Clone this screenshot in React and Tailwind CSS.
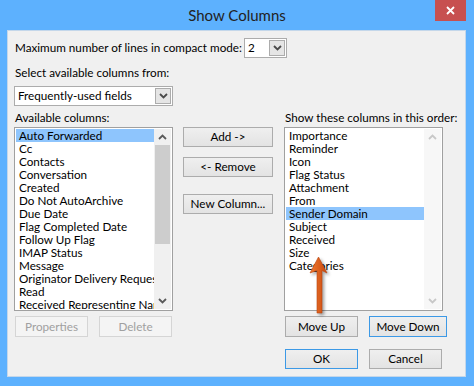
import React from "react";

const ChevDown = ({ color = "#4a4a4a" }) => (
  <svg width="9" height="6" viewBox="0 0 9 6">
    <polyline points="1,1 4.5,4.5 8,1" fill="none" stroke={color} strokeWidth="1.8" />
  </svg>
);
const ChevUp = ({ color = "#5a5a5a" }) => (
  <svg width="9" height="6" viewBox="0 0 9 6">
    <polyline points="1,5 4.5,1.5 8,5" fill="none" stroke={color} strokeWidth="1.8" />
  </svg>
);

function Select({ value, w }) {
  return (
    <div className={`flex items-center h-[20px] bg-white border border-[#acacac] ${w}`}>
      <span className="pl-[3px] leading-none">{value}</span>
      <div className="ml-auto mr-[1px] w-[16px] h-[16px] bg-[#e5e5e5] border border-[#acacac] flex items-center justify-center">
        <ChevDown />
      </div>
    </div>
  );
}

function Btn({ children, w, h = "h-[21px]", def, disabled, cls = "" }) {
  return (
    <div
      className={`${w} ${h} ${cls} flex items-center justify-center border ${
        disabled
          ? "border-[#d5d5d5] bg-[#f4f4f4] text-[#a0a0a0]"
          : def
          ? "border-[#3c99e6] bg-linear-to-b from-[#efefef] to-[#e3e3e3] text-black"
          : "border-[#acacac] bg-linear-to-b from-[#efefef] to-[#e3e3e3] text-black"
      }`}
    >
      {children}
    </div>
  );
}

function ListBox({ items, selected, enabled }) {
  return (
    <div className="w-[159px] h-[184px] bg-white border border-[#a0a0a0] p-[1px] flex overflow-hidden">
      <div className="w-[138px] flex flex-col overflow-hidden">
        {items.map((it) => (
          <div
            key={it}
            className={`h-[13px] shrink-0 leading-[13px] pl-[3px] whitespace-nowrap overflow-hidden ${
              it === selected ? "bg-[#8ec5fd]" : ""
            }`}
          >
            {it}
          </div>
        ))}
      </div>
      <div className={`w-[17px] flex flex-col ${enabled ? "bg-[#f0f0f0]" : "bg-[#f7f7f7]"}`}>
        <div className="h-[16px] flex items-center justify-center">
          <ChevUp color={enabled ? "#5a5a5a" : "#c8c8c8"} />
        </div>
        {enabled ? <div className="mx-[1px] h-[99px] bg-[#cdcdcd]" /> : null}
        <div className="flex-1" />
        <div className="h-[17px] flex items-center justify-center">
          <ChevDown color={enabled ? "#5a5a5a" : "#c8c8c8"} />
        </div>
      </div>
    </div>
  );
}

const leftItems = [
  "Auto Forwarded",
  "Cc",
  "Contacts",
  "Conversation",
  "Created",
  "Do Not AutoArchive",
  "Due Date",
  "Flag Completed Date",
  "Follow Up Flag",
  "IMAP Status",
  "Message",
  "Originator Delivery Requested",
  "Read",
  "Received Representing Name",
];
const rightItems = [
  "Importance",
  "Reminder",
  "Icon",
  "Flag Status",
  "Attachment",
  "From",
  "Sender Domain",
  "Subject",
  "Received",
  "Size",
  "Categories",
];

export default function App() {
  return (
    <div className="relative w-[474px] h-[386px] bg-[#5db1fe] overflow-hidden font-['Lato',sans-serif] text-[11.7px] text-black">
      <div className="h-[30px] grid grid-cols-[1fr_auto_1fr]">
        <div />
        <div className="flex items-center text-[15px] text-[#222]">Show Columns</div>
        <div className="flex justify-end items-start pr-[8px]">
          <div className="w-[31px] h-[21px] bg-[#c75050] flex items-center justify-center">
            <svg width="9" height="9" viewBox="0 0 9 9">
              <path d="M1 1 L8 8 M8 1 L1 8" stroke="white" strokeWidth="1.8" />
            </svg>
          </div>
        </div>
      </div>
      <div className="ml-[7px] w-[459px] h-[347px] bg-[#f0f0f0] border border-[#c4d7ea]">
        <div className="mt-[7px] flex items-center h-[20px] pl-[7px]">
          <div className="w-[229px] whitespace-nowrap">Maximum number of lines in compact mode:</div>
          <Select value="2" w="w-[43px]" />
        </div>
        <div className="mt-[6px] h-[16px] leading-[16px] pl-[7px]">Select available columns from:</div>
        <div className="mt-[6px] pl-[6px]">
          <Select value="Frequently-used fields" w="w-[159px]" />
        </div>
        <div className="mt-[3px] pl-[6px] flex">
          <div className="w-[159px] flex flex-col">
            <div className="h-[16px] leading-[16px] pl-[1px]">Available columns:</div>
            <div className="mt-[2px]">
              <ListBox items={leftItems} selected="Auto Forwarded" enabled />
            </div>
            <div className="mt-[5px] flex">
              <Btn w="w-[73px]" disabled cls="ml-[1px]">Properties</Btn>
              <Btn w="w-[73px]" disabled cls="ml-[11px]">Delete</Btn>
            </div>
          </div>
          <div className="ml-[10px] w-[90px] pt-[18px] flex flex-col">
            <Btn w="w-[90px]" h="h-[20px]">Add -&gt;</Btn>
            <Btn w="w-[90px]" h="h-[20px]" cls="mt-[10px]">&lt;- Remove</Btn>
            <Btn w="w-[90px]" h="h-[20px]" cls="mt-[17px]">New Column...</Btn>
          </div>
          <div className="ml-[11px] w-[164px] flex flex-col">
            <div className="h-[16px] leading-[16px] pl-[1px] whitespace-nowrap">Show these columns in this order:</div>
            <div className="mt-[2px]">
              <ListBox items={rightItems} selected="Sender Domain" enabled={false} />
            </div>
            <div className="mt-[5px] flex">
              <Btn w="w-[73px]" cls="ml-[1px]">Move Up</Btn>
              <Btn w="w-[78px]" def cls="ml-[11px]">Move Down</Btn>
            </div>
            <div className="mt-[12px] flex">
              <Btn w="w-[73px]" h="h-[20px]" def cls="ml-[1px]">OK</Btn>
              <Btn w="w-[73px]" h="h-[20px]" cls="ml-[11px]">Cancel</Btn>
            </div>
          </div>
        </div>
      </div>
      <svg
        className="absolute left-[306px] top-[255px] drop-shadow-[2px_2px_1.5px_rgba(0,0,0,0.35)]"
        width="24"
        height="62"
        viewBox="0 0 24 62"
      >
        <defs>
          <linearGradient id="ag" x1="0" x2="1" y1="0" y2="0">
            <stop offset="0" stopColor="#f07a30" />
            <stop offset="1" stopColor="#c8480e" />
          </linearGradient>
        </defs>
        <path
          d="M12.5 2 L21 18 L16 15.5 L16 58 L11 58 L11 15.5 L4 18 Z"
          fill="url(#ag)"
          stroke="#b8430e"
          strokeWidth="0.6"
        />
      </svg>
    </div>
  );
}
